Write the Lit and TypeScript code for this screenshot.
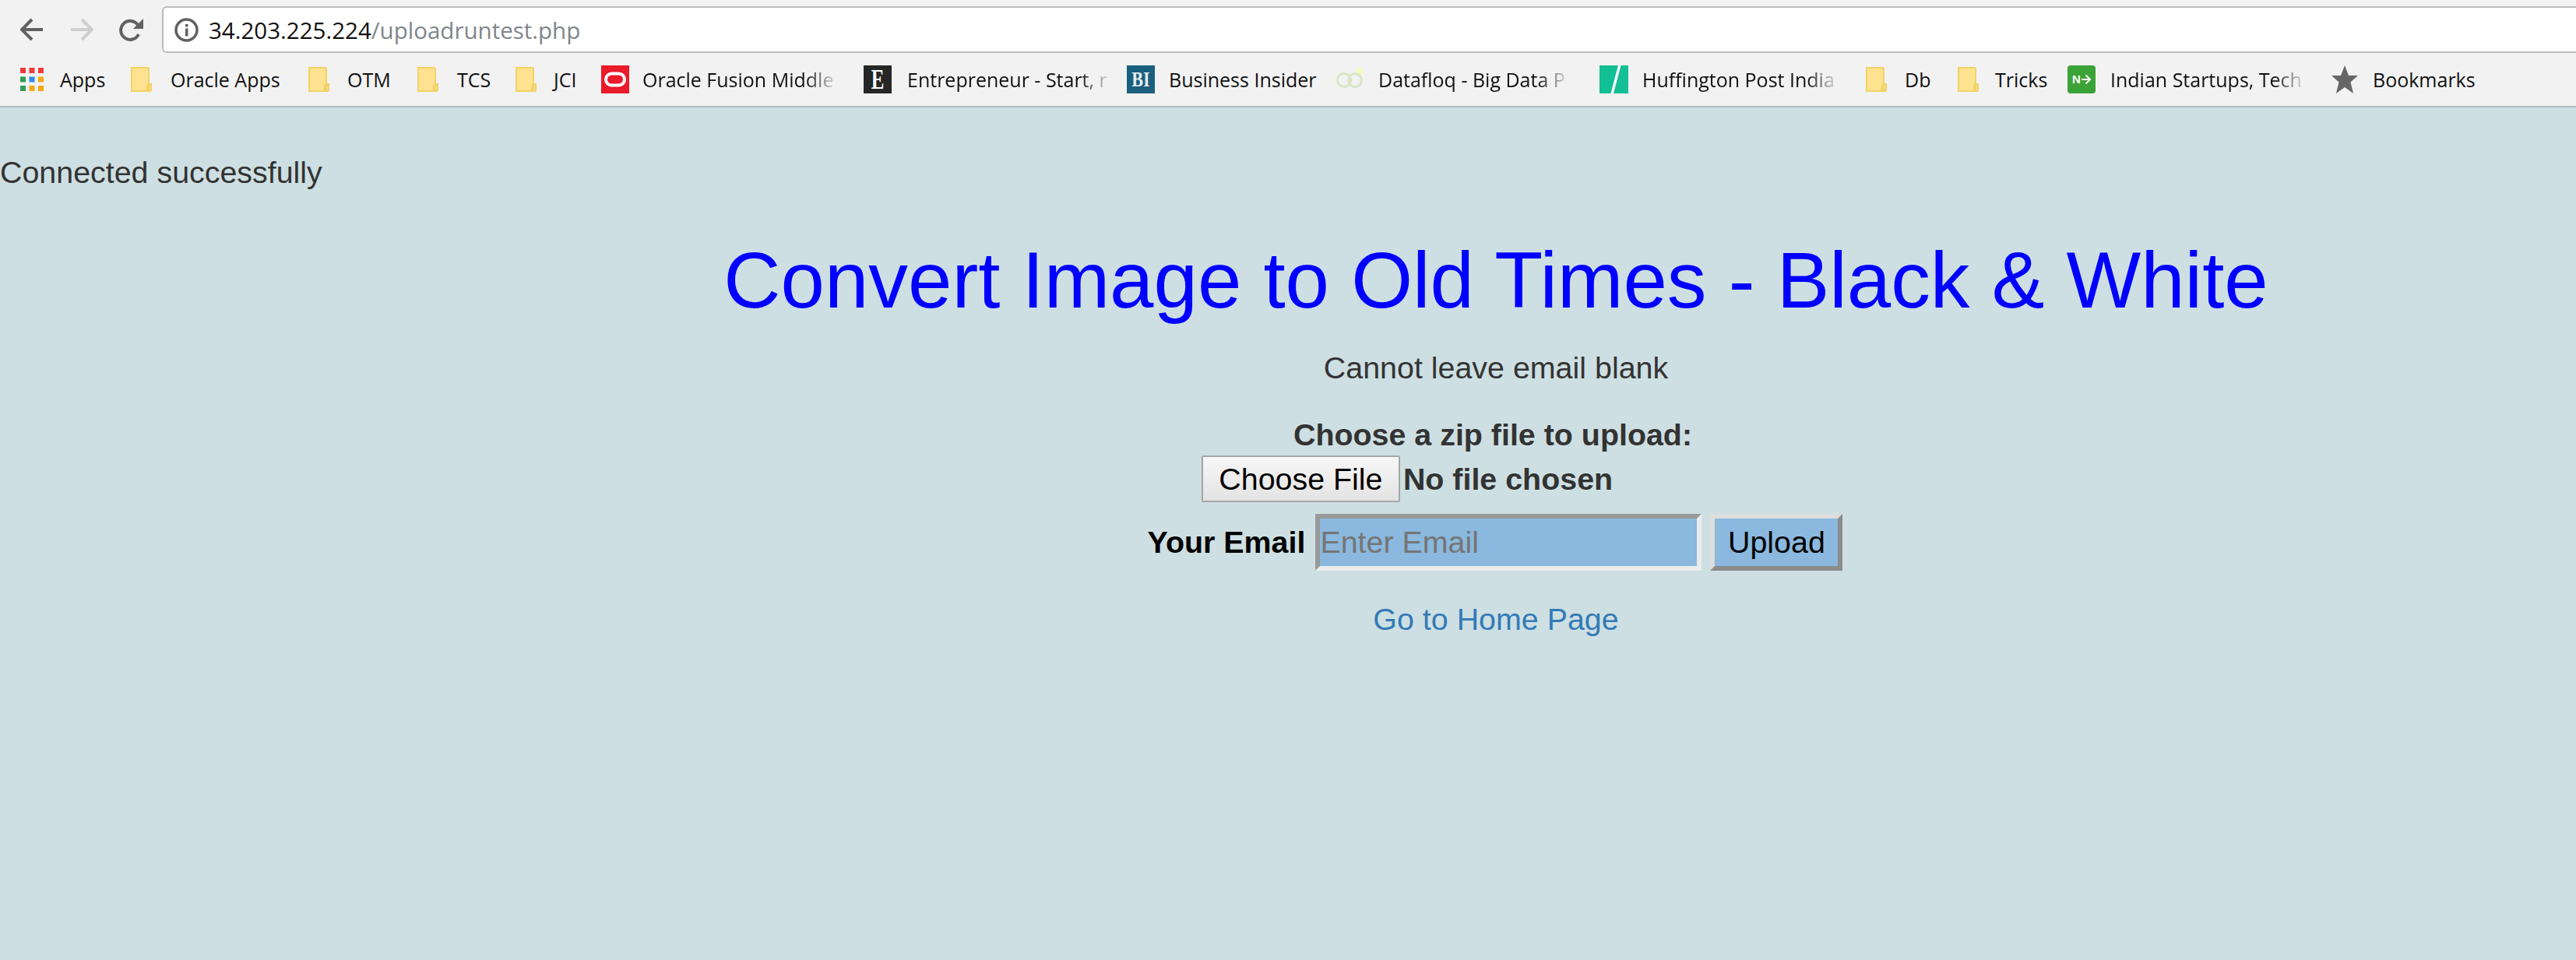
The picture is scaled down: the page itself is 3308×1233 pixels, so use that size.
import { LitElement, html, css, svg } from 'lit';
import { customElement } from 'lit/decorators.js';

const folder = svg`<svg width="27" height="32" viewBox="0 0 27 32"><path d="M1 1h21l1 1v20h3v8l-1 1H1z" fill="#fde28f" stroke="#f2d267" stroke-width="2"/><path d="M23 31v-9M21 31v-6a2.5 2.500 0 0 1 5 0v5" fill="none" stroke="#f2d267" stroke-width="2"/></svg>`;

const apps = svg`<svg width="30" height="30" viewBox="0 0 30 30">
  <g fill="#ef3b3b"><rect width="7" height="7"/><rect x="11.500" width="7" height="7"/><rect x="23" width="7" height="7"/></g>
  <rect y="11.500" width="7" height="7" fill="#2f9e55"/><rect x="11.500" y="11.500" width="7" height="7" fill="#2d8cf0"/><rect x="23" y="11.500" width="7" height="7" fill="#f5a913"/>
  <rect y="23" width="7" height="7" fill="#2f9e55"/><rect x="11.500" y="23" width="7" height="7" fill="#f5a913"/><rect x="23" y="23" width="7" height="7" fill="#f5a913"/>
</svg>`;

const oracle = svg`<svg width="36" height="36" viewBox="0 0 36 36"><rect width="36" height="36" fill="#ea1b2a"/><rect x="6" y="10.500" width="24" height="15" rx="7.500" fill="none" stroke="#fff" stroke-width="4"/></svg>`;

const entrepreneur = svg`<svg width="36" height="36" viewBox="0 0 36 36"><rect width="36" height="36" fill="#262626"/><text transform="translate(18 30) scale(.78 1.15)" text-anchor="middle" font-family="Liberation Serif" font-weight="700" font-size="32" fill="#fff">E</text></svg>`;

const bi = svg`<svg width="36" height="36" viewBox="0 0 36 36"><rect width="36" height="36" fill="#1b5f7e"/><text transform="translate(18 27) scale(.82 1)" text-anchor="middle" font-family="Liberation Serif" font-weight="700" font-size="27" fill="#e6edf0">BI</text></svg>`;

const dataflog = svg`<svg width="37" height="36" viewBox="0 0 37 36"><circle cx="31" cy="8" r="5" fill="#f6f8c4"/><g fill="none" stroke="#d9e6c6" stroke-width="3"><circle cx="11" cy="19" r="8.500"/><circle cx="25" cy="19" r="8.500"/></g></svg>`;

const huffington = svg`<svg width="37" height="36" viewBox="0 0 37 36"><rect width="37" height="36" fill="#13bf94"/><path d="M24 0h3.500L18 36h-3.500z" fill="#fff"/></svg>`;

const nextbig = svg`<svg width="36" height="36" viewBox="0 0 36 36"><rect width="36" height="36" rx="4" fill="#3ba237"/><text x="11.500" y="23" text-anchor="middle" font-family="Liberation Sans" font-weight="700" font-size="15" fill="#fff">N</text><path d="M18 18h10M23.500 12.500L29 18l-5.500 5.500" fill="none" stroke="#fff" stroke-width="2"/></svg>`;

const star = svg`<svg width="34" height="36" viewBox="0 0 34 36"><path d="M17 0l5 13h12l-9.500 8.500L28 36 17 28 6 36l3.500-14.500L0 13h12z" fill="#666"/></svg>`;

// left edge of the next item minus this one's left edge, from the reference
const bookmarks = [
  { label: 'Apps', icon: apps, width: 142, textGap: 21 },
  { label: 'Oracle Apps', icon: folder, width: 228, textGap: 24 },
  { label: 'OTM', icon: folder, width: 140, textGap: 23 },
  { label: 'TCS', icon: folder, width: 126, textGap: 24 },
  { label: 'JCI', icon: folder, width: 110, textGap: 22 },
  { label: 'Oracle Fusion Middle', icon: oracle, width: 337, textGap: 17, cut: true },
  { label: 'Entrepreneur - Start, r', icon: entrepreneur, width: 338, textGap: 20, cut: true },
  { label: 'Business Insider', icon: bi, width: 268, textGap: 18 },
  { label: 'Datafloq - Big Data P', icon: dataflog, width: 339, textGap: 18, cut: true },
  { label: 'Huffington Post India', icon: huffington, width: 342, textGap: 18, cut: true },
  { label: 'Db', icon: folder, width: 118, textGap: 23 },
  { label: 'Tricks', icon: folder, width: 141, textGap: 21 },
  { label: 'Indian Startups, Tech', icon: nextbig, width: 339, textGap: 19, cut: true },
  { label: 'Bookmarks', icon: star, width: 200, textGap: 19 },
];

@customElement('app-root')
export class AppRoot extends LitElement {
  static styles = css`
    :host {
      display: block;
      height: 1233px;
      overflow: hidden;
      background: #cddfe2;
      font-family: 'Liberation Sans', Arial, sans-serif;
      font-size: 39.4px;
      color: #333;
    }

    .chrome {
      height: 136px;
      background: #f2f2f2;
      border-bottom: 2px solid #b4c0c4;
    }

    .nav {
      height: 72px;
      display: flex;
      align-items: flex-start;
      padding-top: 8px;
      box-sizing: border-box;
    }

    .nav-buttons {
      width: 208px;
      height: 60px;
      flex: none;
      display: flex;
      align-items: center;
      padding-left: 26px;
      box-sizing: border-box;
    }

    .back { margin-right: 34px; }
    .forward { margin-right: 33px; }

    .omnibox {
      flex: 1;
      height: 60px;
      background: #fff;
      border: 2px solid #bcbcbc;
      border-right: none;
      border-radius: 6px 0 0 6px;
      box-sizing: border-box;
      display: flex;
      align-items: center;
      padding-left: 14px;
      font-family: 'Open Sans', sans-serif;
      font-size: 29.5px;
      color: #111;
    }

    .omnibox svg { margin-right: 13px; }
    .path { color: #80868b; }

    .bar {
      height: 60px;
      display: flex;
      align-items: center;
      padding-left: 26px;
      font-family: 'Open Sans', sans-serif;
      font-size: 25px;
      color: #111;
    }

    .mark {
      display: flex;
      align-items: center;
      flex: none;
      height: 60px;
      white-space: nowrap;
    }

    .mark svg { flex: none; display: block; }

    .mark.cut span {
      -webkit-mask-image: linear-gradient(90deg, #000 calc(100% - 36px), rgba(0, 0, 0, 0.15));
      mask-image: linear-gradient(90deg, #000 calc(100% - 36px), rgba(0, 0, 0, 0.15));
    }

    .status {
      margin: 60px 0 0;
      line-height: 46px;
    }

    .panel {
      margin-left: 534px;
      text-align: center;
    }

    h1 {
      margin: 54px 0 0;
      font-size: 101.4px;
      font-weight: 400;
      line-height: 124px;
      color: #0000ff;
    }

    .warning {
      margin: 27px 0 0;
      line-height: 46px;
    }

    .picker {
      margin-top: 40px;
      padding-right: 8px;
      font-weight: 700;
      line-height: 46px;
    }

    .file-row {
      display: flex;
      justify-content: center;
      align-items: center;
      gap: 4px;
      height: 60px;
      margin-top: 4px;
      padding-right: 228px;
      font-weight: 700;
    }

    .file-row button {
      width: 255px;
      height: 60px;
      padding: 0;
      font: 400 39.4px 'Liberation Sans', sans-serif;
      color: #000;
      background: linear-gradient(#f7f7f7, #e3e3e3);
      border: 2px solid #a6a6a6;
      border-radius: 2px;
    }

    .email-row {
      display: flex;
      justify-content: center;
      align-items: center;
      height: 73px;
      margin-top: 15px;
      padding-right: 2px;
      font-weight: 700;
      color: #000;
    }

    .email-row label { margin-right: 13px; }

    .email-row input {
      width: 496px;
      height: 73px;
      padding: 0;
      box-sizing: border-box;
      font: 400 39.4px 'Liberation Sans', sans-serif;
      background: #8ab8de;
      border: 6px solid;
      border-color: #999 #ececec #ececec #999;
      outline: none;
    }

    .email-row input::placeholder { color: #757575; opacity: 1; }

    .email-row button {
      width: 170px;
      height: 73px;
      margin-left: 11px;
      padding: 0;
      box-sizing: border-box;
      font: 400 39.4px 'Liberation Sans', sans-serif;
      color: #000;
      background: #8ab8de;
      border: 6px solid;
      border-color: #ddd #8c8c8c #8c8c8c #ddd;
    }

    .home {
      margin-top: 39px;
      line-height: 46px;
    }

    .home a { color: #337ab7; text-decoration: none; }
  `;

  render() {
    return html`
      <div class="chrome">
        <div class="nav">
          <div class="nav-buttons">
            <svg class="back" width="30" height="30" viewBox="0 0 30 30"><path d="M29 15H3M15 2L2 15l13 13" fill="none" stroke="#616161" stroke-width="4"/></svg>
            <svg class="forward" width="30" height="30" viewBox="0 0 30 30"><path d="M1 15h26M15 2l13 13-13 13" fill="none" stroke="#cfcfcf" stroke-width="4"/></svg>
            <svg width="31" height="31" viewBox="0 0 31 31"><path d="M25 21a12 12 0 1 1-1-12" fill="none" stroke="#616161" stroke-width="4"/><path d="M31 1v13H18z" fill="#616161"/></svg>
          </div>
          <div class="omnibox">
            <svg width="31" height="31" viewBox="0 0 31 31"><circle cx="15.500" cy="15.500" r="13.500" fill="none" stroke="#616161" stroke-width="3.500"/><rect x="14" y="13.500" width="3.500" height="10" fill="#616161"/><rect x="14" y="8" width="3.500" height="3.500" fill="#616161"/></svg>
            <span>34.203.225.224<span class="path">/uploadruntest.php</span></span>
          </div>
        </div>
        <div class="bar">
          ${bookmarks.map(b => html`
            <div class="mark ${b.cut ? 'cut' : ''}" style="width:${b.width}px">
              ${b.icon}
              <span style="margin-left:${b.textGap}px">${b.label}</span>
            </div>
          `)}
        </div>
      </div>
      <p class="status">Connected successfully</p>
      <div class="panel">
        <h1>Convert Image to Old Times - Black &amp; White</h1>
        <p class="warning">Cannot leave email blank</p>
        <div class="picker">Choose a zip file to upload:</div>
        <div class="file-row">
          <button type="button">Choose File</button>
          <span>No file chosen</span>
        </div>
        <div class="email-row">
          <label>Your Email</label>
          <input type="text" placeholder="Enter Email" />
          <button type="button">Upload</button>
        </div>
        <div class="home"><a href="#">Go to Home Page</a></div>
      </div>
    `;
  }
}
